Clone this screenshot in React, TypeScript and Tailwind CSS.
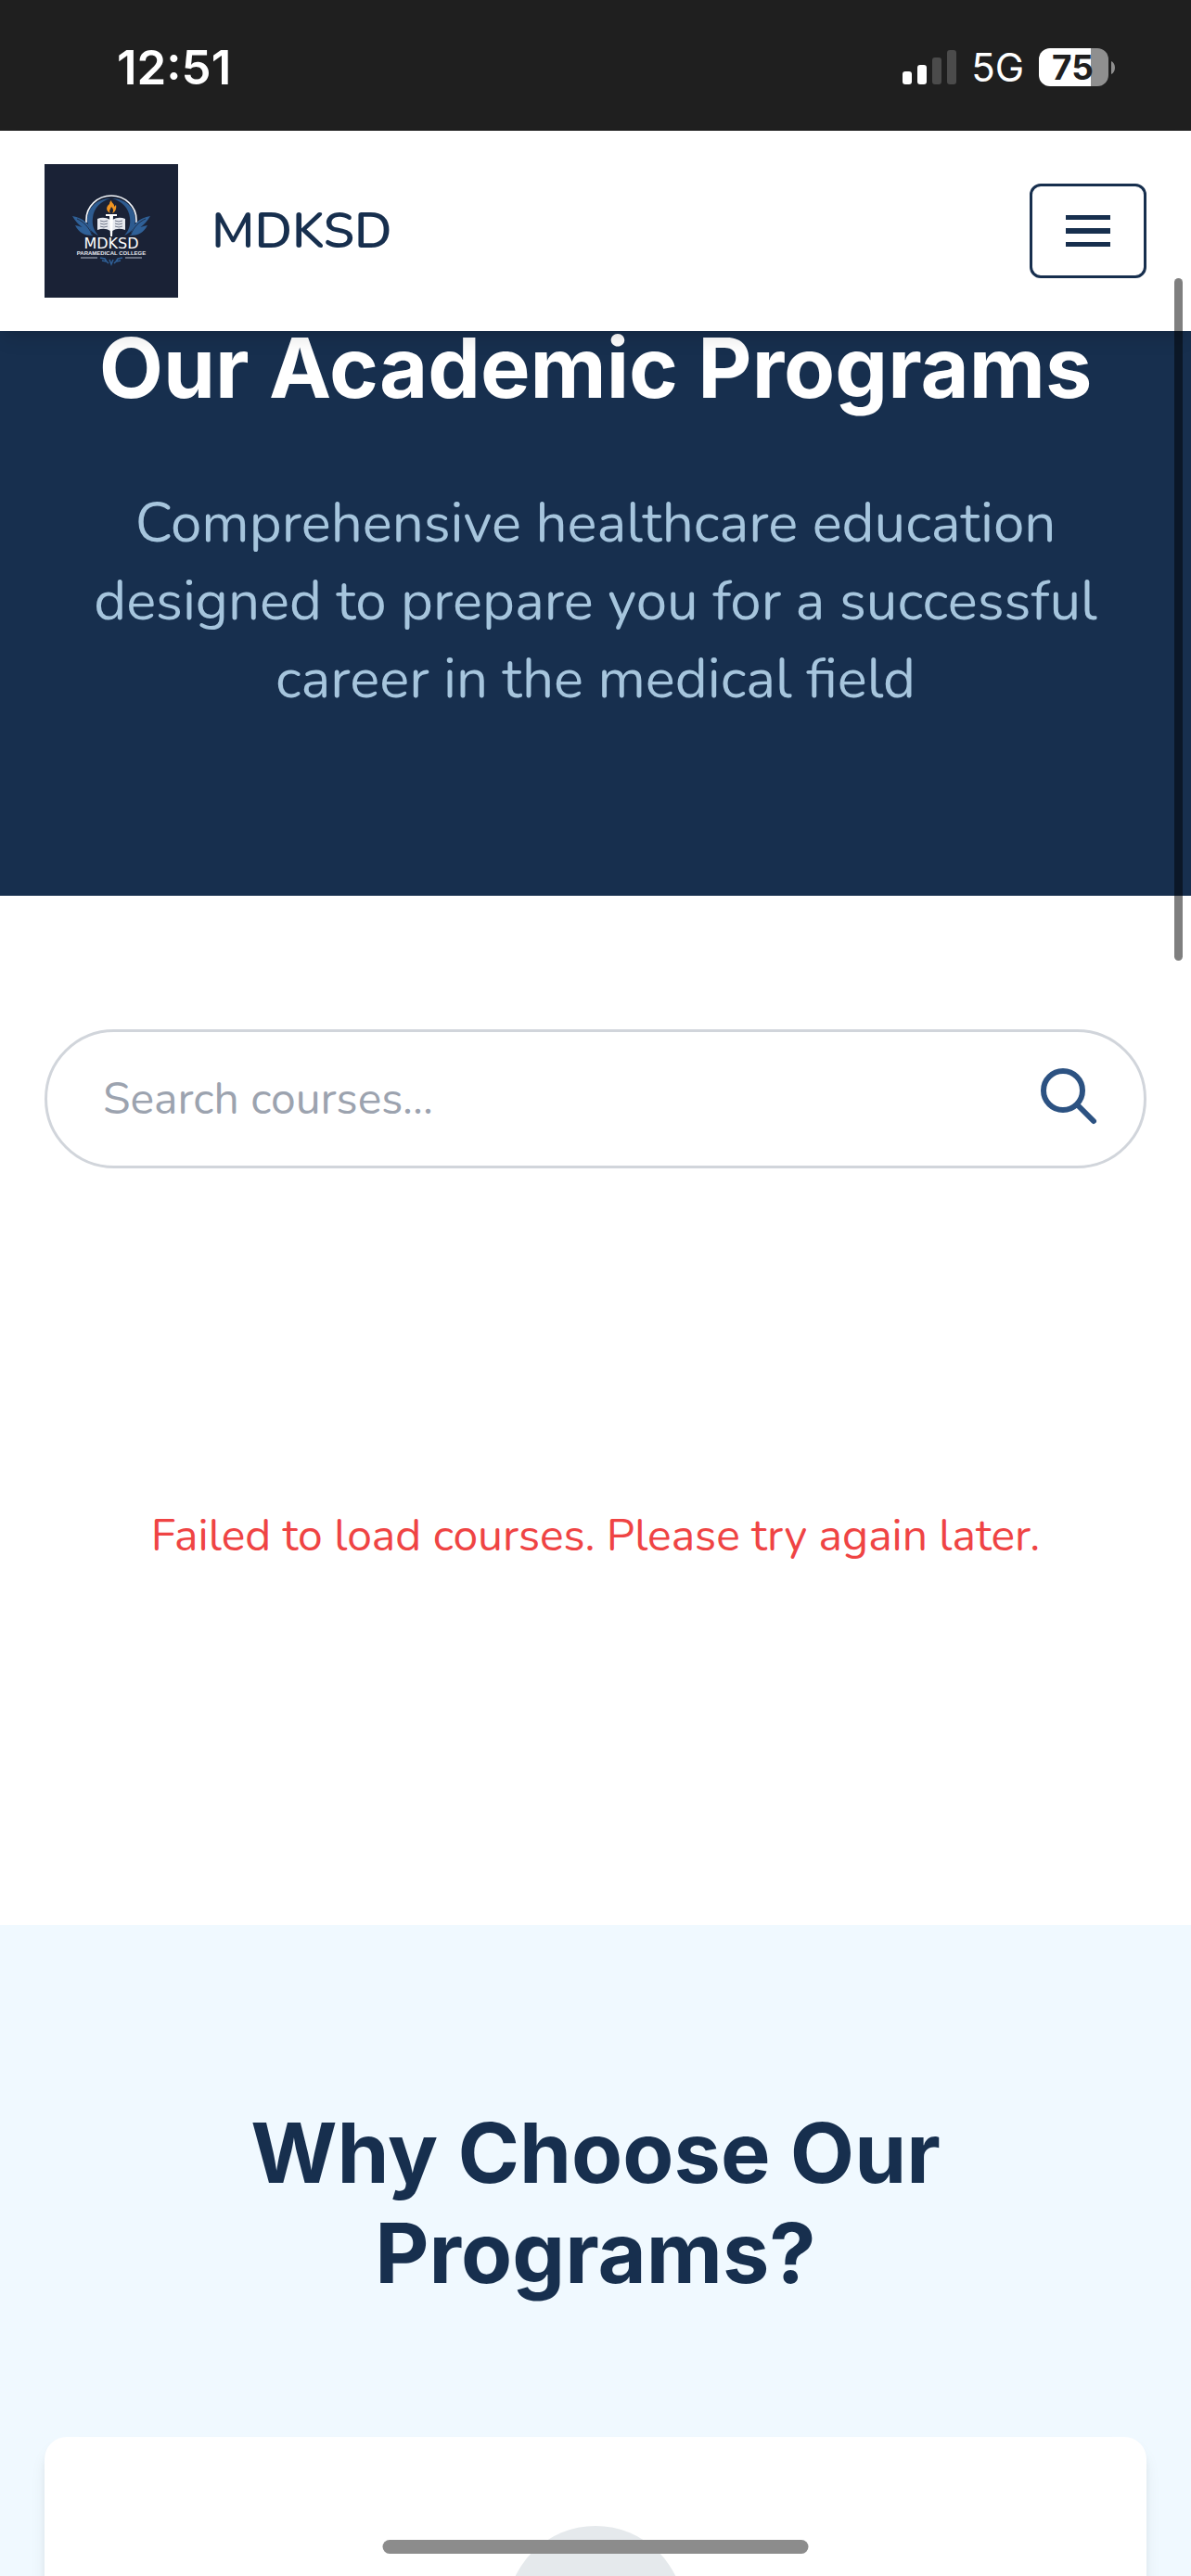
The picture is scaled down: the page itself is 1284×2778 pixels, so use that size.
import { useState } from "react";

const bodyFont = "font-['Nunito','Noto_Sans',sans-serif]";
const headingFont = "font-['Inter',sans-serif]";

function SignalBars() {
  return (
    <svg className="h-[38px] w-[58px]" viewBox="0 0 58 38" aria-hidden="true">
      <rect x="0" y="23" width="10" height="14" rx="3" fill="#fff" />
      <rect x="16" y="16" width="10" height="21" rx="3" fill="#fff" />
      <rect x="32" y="8" width="10" height="29" rx="3" fill="#4b4b4b" />
      <rect x="48" y="0" width="10" height="37" rx="3" fill="#4b4b4b" />
    </svg>
  );
}

function Battery() {
  return (
    <div className="flex items-center gap-[3px]">
      <div className="flex h-[41px] w-[75px] items-center justify-center rounded-[12px] bg-[linear-gradient(90deg,#fff_75%,#8f8f8f_75%)] pr-[2px] text-[37px] leading-[41px] font-bold text-[#1f1f1f]">
        75
      </div>
      <svg className="h-[14px] w-[4px]" viewBox="0 0 4 14" aria-hidden="true">
        <path d="M0 0C2.500 1 4 4 4 7S2.500 13 0 14Z" fill="#8f8f8f" />
      </svg>
    </div>
  );
}

function StatusBar() {
  return (
    <div className={`flex h-[141px] items-center justify-between bg-[#1f1f1f] pt-1 pr-[82px] pl-[126px] text-white ${headingFont}`}>
      <span className="text-[51px] leading-[60px] font-semibold">12:51</span>
      <div className="flex items-center gap-4">
        <SignalBars />
        <span className="text-[42px] leading-[48px]">5G</span>
        <Battery />
      </div>
    </div>
  );
}

function Logo() {
  return (
    <svg className="size-36 shrink-0" viewBox="0 0 144 144" role="img" aria-label="MDKSD Paramedical College">
      <rect width="144" height="144" fill="#1a2236" />
      <path d="M71 37C54 38 46 49 46 61C47 69 51 74 58 77C53 71 51 66 52 58C53 47 61 40 71 37Z" fill="#2d5b90" />
      <path d="M73 37C90 38 98 49 98 61C97 69 93 74 86 77C91 71 93 66 92 58C91 47 83 40 73 37Z" fill="#2d5b90" />
      <path d="M45 63V60A27 26 0 0 1 99 60V63" fill="none" stroke="#f4f7fb" strokeWidth="1.600" />
      <path d="M30 56C42 58 50 65 51 77C45 70 36 67 30 56ZM33 66C43 68 48 71 52 77C43 77 37 74 33 66Z" fill="#2f6097" />
      <path d="M114 56C102 58 94 65 93 77C99 70 108 67 114 56ZM111 66C101 68 96 71 92 77C101 77 107 74 111 66Z" fill="#2f6097" />
      <path d="M35 59C42 62 48 68 51 76M109 59C102 62 96 68 93 76" fill="none" stroke="#1a2236" strokeWidth="0.800" />
      <path d="M71 53C65 50 67 45 70 43C70 41 71 40 72 39C72 42 76 43 75 46L77 44C78 48 76 52 73 53C75 50 74 48 72 46C71 49 69 50 71 53Z" fill="#ef9422" />
      <path d="M57 59V71Q65 68 71 72V60Q64 56 57 59ZM87 59V71Q79 68 73 72V60Q80 56 87 59Z" fill="#e6e9ef" />
      <path d="M60 61q4 2 8 0M60 64q4 2 8 0M60 67q4 2 8 0M84 61q-4 2-8 0M84 64q-4 2-8 0M84 67q-4 2-8 0" fill="none" stroke="#4d566b" strokeWidth="0.800" />
      <path d="M66 54H78V56H74L73 78H71L70 56H66Z" fill="#fff" />
      <text x="72" y="91" textAnchor="middle" fill="#fff" className="font-['DejaVu_Sans',sans-serif] text-[16px]">
        MDKSD
      </text>
      <text
        x="72"
        y="98"
        textAnchor="middle"
        fill="#e6e9ef"
        className="font-['Liberation_Sans_Narrow','Liberation_Sans',sans-serif] text-[6px] font-bold"
      >
        PARAMEDICAL COLLEGE
      </text>
      <path d="M39 101H57M87 101H105" stroke="#7f8797" strokeWidth="1.500" />
      <path d="M60 101l5 1 2 3M84 101l-5 1-2 3M62 104l5 1M82 104l-5 1M70 103l2 5 2-5M67 105l2 2M77 105l-2 2" fill="none" stroke="#2f6097" strokeWidth="1.500" />
    </svg>
  );
}

function Header({ open, onToggle }: { open: boolean; onToggle: () => void }) {
  return (
    <header className="sticky top-0 z-10 flex items-center justify-between bg-white px-12 py-9 shadow-[0_12px_18px_-3px_rgb(0_0_0/0.1),0_6px_12px_-6px_rgb(0_0_0/0.1)]">
      <a href="#" className="flex items-center gap-9 text-[#172f4e]">
        <Logo />
        <span className="text-[54px] leading-[72px] font-semibold">MDKSD</span>
      </a>
      <button
        type="button"
        aria-label="Menu"
        aria-expanded={open}
        onClick={onToggle}
        className="rounded-xl border-[3px] border-[#172f4e] px-6 py-3 text-[#172f4e]"
      >
        <svg className="size-[72px]" viewBox="0 0 72 72" fill="currentColor" aria-hidden="true">
          <path d="M12 19H60V24H12ZM12 33H60V39H12ZM12 48H60V53H12Z" />
        </svg>
      </button>
    </header>
  );
}

export default function App() {
  const [open, setOpen] = useState(false);
  const [query, setQuery] = useState("");

  return (
    <div className={`relative h-screen overflow-hidden bg-white ${bodyFont}`}>
      <StatusBar />
      <Header open={open} onToggle={() => setOpen(!open)} />

      <main>
        <section className="-mt-[206px] bg-[#172f4e] px-12 py-48 text-center">
          <h1 className={`text-[90px] leading-[108px] font-bold text-white ${headingFont}`}>Our Academic Programs</h1>
          <p className="mt-[71px] text-[60px] leading-[84px] text-[#a6c5dd]">
            Comprehensive healthcare education designed to prepare you for a successful career in the medical field
          </p>
        </section>

        <section className="px-12 pt-36">
          <form className="relative" onSubmit={(e) => e.preventDefault()}>
            <input
              type="text"
              aria-label="Search courses"
              placeholder="Search courses..."
              value={query}
              onChange={(e) => setQuery(e.target.value)}
              className="block h-[150px] w-full rounded-full border-[3px] border-[#d1d5db] pr-36 pl-[60px] text-[48px] leading-[72px] outline-none placeholder:text-[#9ca3af]"
            />
            <button type="submit" aria-label="Search" className="absolute top-9 right-12 text-[#2c5282]">
              <svg
                className="size-[72px]"
                viewBox="0 0 24 24"
                fill="none"
                stroke="currentColor"
                strokeWidth="2"
                strokeLinecap="round"
                strokeLinejoin="round"
                aria-hidden="true"
              >
                <path d="M21 21l-6-6m2-5a7 7 0 11-14 0 7 7 0 0114 0z" />
              </svg>
            </button>
          </form>
          <p role="alert" className="pt-[360px] pb-96 text-center text-[48px] leading-[72px] text-[#ef4444]">
            Failed to load courses. Please try again later.
          </p>
        </section>

        <section className="bg-[#f0f9ff] px-12 py-48">
          <h2 className={`text-center text-[90px] leading-[108px] font-bold text-[#172f4e] ${headingFont}`}>
            Why Choose Our Programs?
          </h2>
          <article className="mt-36 flex h-[600px] justify-center rounded-3xl bg-white p-24 shadow-[0_12px_18px_-3px_rgb(0_0_0/0.1),0_6px_12px_-6px_rgb(0_0_0/0.1)]">
            <div className="size-48 rounded-full bg-[#e5e9ec]" />
          </article>
        </section>
      </main>

      <div className="absolute top-[300px] right-[9px] z-20 h-[736px] w-[9px] rounded-full bg-black/50" />
      <div className="absolute bottom-6 left-1/2 z-20 h-[15px] w-[459px] -translate-x-1/2 rounded-full bg-[#8c8c8c]" />
    </div>
  );
}
